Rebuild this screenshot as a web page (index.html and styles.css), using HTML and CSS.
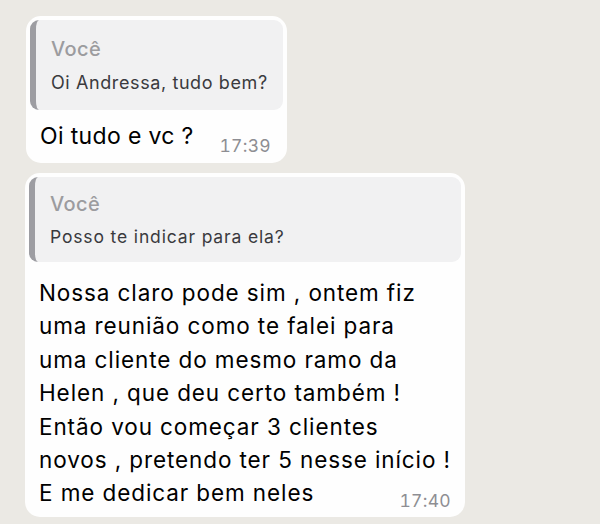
FILE: index.html
```html
<!DOCTYPE html>
<html lang="pt-BR">
<head>
<meta charset="utf-8">
<link rel="stylesheet" href="styles.css">
</head>
<body>
<div class="chat">
  <div class="bubble b1">
    <div class="quote">
      <div class="q-name">Você</div>
      <div class="q-text">Oi Andressa, tudo bem?</div>
    </div>
    <div class="msg">
      <div class="text">Oi tudo e vc ?</div>
      <div class="time">17:39</div>
    </div>
  </div>
  <div class="bubble b2">
    <div class="quote">
      <div class="q-name">Você</div>
      <div class="q-text">Posso te indicar para ela?</div>
    </div>
    <div class="msg">
      <div class="text">Nossa claro pode sim , ontem fiz<br>uma reunião como te falei para<br>uma cliente do mesmo ramo da<br>Helen , que deu certo também !<br>Então vou começar 3 clientes<br>novos , pretendo ter 5 nesse início !<br>E me dedicar bem neles</div>
      <div class="time">17:40</div>
    </div>
  </div>
</div>
</body>
</html>
```

FILE: styles.css
```css
html, body {
  margin: 0;
  padding: 0;
}
body {
  background: #ebe9e4;
  font-family: Inter, "Noto Sans", sans-serif;
  width: 600px;
  height: 524px;
  overflow: hidden;
}
.chat {
  display: flex;
  flex-direction: column;
  align-items: flex-start;
  gap: 10px;
  padding: 16px 0 0 26px;
}
.bubble {
  background: #fefefe;
  border-radius: 15px;
  padding: 4px;
  box-sizing: border-box;
}
.b1 {
  width: 261px;
  height: 147px;
}
.b2 {
  width: 440px;
  height: 344px;
  margin-left: -1px;
}
.quote {
  background: #f1f1f2;
  border-left: 6px solid #9d9da2;
  border-radius: 9px;
  box-sizing: border-box;
  padding-left: 15px;
  display: flex;
  flex-direction: column;
}
.b1 .quote {
  height: 90px;
  padding-top: 17px;
  gap: 10px;
}
.b2 .quote {
  height: 85px;
  padding-top: 15px;
  gap: 9px;
}
.q-name {
  color: #9c9c9f;
  font-size: 20px;
  line-height: 24px;
  font-weight: 500;
  letter-spacing: 0.4px;
}
.q-text {
  color: #3a3a3e;
  font-size: 18px;
  line-height: 24px;
  letter-spacing: 0.6px;
}
.b2 .q-text {
  font-size: 17.5px;
  letter-spacing: 0.85px;
}
.msg {
  display: grid;
  grid-template-columns: 1fr;
  padding: 0 12px 0 10px;
}
.msg > .text,
.msg > .time {
  grid-area: 1 / 1;
}
.b1 .msg {
  padding-top: 11px;
}
.b2 .msg {
  padding-top: 14px;
  padding-right: 11px;
}
.text {
  color: #000;
  white-space: nowrap;
  justify-self: start;
}
.b1 .text {
  font-size: 23px;
  line-height: 30px;
  letter-spacing: 0.35px;
}
.b2 .text {
  font-size: 22.5px;
  line-height: 33.4px;
  letter-spacing: 0.9px;
}
.time {
  color: #8e8e93;
  font-size: 17.5px;
  line-height: 22px;
  font-variant-numeric: tabular-nums;
  letter-spacing: 0.3px;
  justify-self: end;
  align-self: end;
}
.b1 .time {
  margin-bottom: -6px;
}
.b2 .time {
  margin-bottom: -2px;
}
```
